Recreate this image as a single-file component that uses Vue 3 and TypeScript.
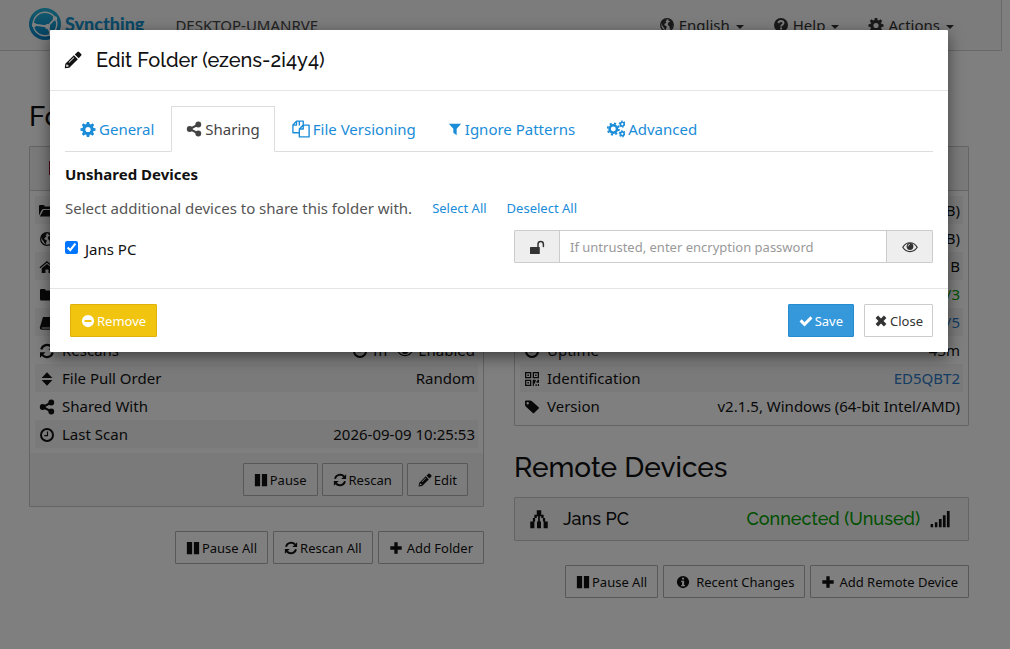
<script setup lang="ts">
import { h, ref } from 'vue'

const glyphs: Record<string, string> = {
  cog: '<path fill-rule="evenodd" d="M6.8 1h2.4l.4 2 1.2.5 1.7-1.2 1.7 1.7-1.2 1.7.5 1.2 2 .4v2.4l-2 .4-.5 1.2 1.2 1.7-1.7 1.7-1.7-1.2-1.2.5-.4 2H6.800l-.4-2-1.200-.5-1.700 1.200-1.700-1.700 1.200-1.700-.5-1.200-2-.4V7.300l2-.4.5-1.200L1.800 4l1.700-1.700 1.700 1.200 1.200-.5zM8 5.900a2.600 2.600 0 1 0 0 5.200 2.600 2.600 0 0 0 0-5.200z"/>',
  cogs: '<circle cx="5.600" cy="8" r="3.300" fill="none" stroke="currentColor" stroke-width="2.200"/><circle cx="5.600" cy="8" r="5" fill="none" stroke="currentColor" stroke-width="1.500" stroke-dasharray="1.960 1.960"/><circle cx="13.600" cy="3.700" r="1.700" fill="none" stroke="currentColor" stroke-width="1.500"/><circle cx="13.600" cy="3.700" r="2.700" fill="none" stroke="currentColor" stroke-width="1" stroke-dasharray="1.410 1.410"/><circle cx="13.600" cy="12.300" r="1.700" fill="none" stroke="currentColor" stroke-width="1.500"/><circle cx="13.600" cy="12.300" r="2.700" fill="none" stroke="currentColor" stroke-width="1" stroke-dasharray="1.410 1.410"/>',
  share: '<circle cx="12.300" cy="3.500" r="2.900"/><circle cx="3.700" cy="8" r="2.900"/><circle cx="12.300" cy="12.500" r="2.900"/><path d="M12.300 3.500 3.700 8l8.600 4.500" fill="none" stroke="currentColor" stroke-width="2"/>',
  copy: '<path d="M6.500 4.800V1H10v3.500M4 1 .8 4.500v6.800H6M6.500 1H4v3.500H.8M10 4.500 6.500 8v7h8.700V4.500zM10 4.500V8H6.500" fill="none" stroke="currentColor" stroke-width="1.200" stroke-linejoin="round"/>',
  filter: '<path d="M1 2h14L9.900 7.800v7.200l-3.800-2.700V7.800z"/>',
  pencil: '<path fill-rule="evenodd" d="M9.600 3 11.900.8q.8-.6 1.500 0L15.300 2.700q.6.700 0 1.400l-2.200 2.300zM8.800 3.800l3.500 3.500-7.600 7.500-4 .6.500-4zM2.200 12l-.3 2.100 2.100-.3v-1.200H3V12zM8.600 5.500 4.100 10l.5.500 4.500-4.500z"/>',
  unlock: '<rect x="1" y="8" width="9.800" height="7" rx=".6"/><path d="M9 8V5.200a2.700 2.700 0 0 1 5.400 0V7.400" fill="none" stroke="currentColor" stroke-width="1.500" stroke-linecap="round"/>',
  eye: '<path d="M.8 8.300C4.300 2.200 11.700 2.200 15.200 8.300 11.700 14 4.300 14 .8 8.300z" fill="none" stroke="currentColor" stroke-width="1.200"/><circle cx="8" cy="7.500" r="3.400"/><path d="M6 7.300q0-1.800 1.900-2" fill="none" stroke="#fff" stroke-width=".7"/>',
  check: '<path d="m.6 8.600 2.500-2.500 3.200 3.200L13 2.700l2.400 2.400-9.100 9.100z"/>',
  times: '<path d="m1.800 4.700 2.900-2.900L8 5.200l3.300-3.400 2.900 2.900L10.900 8l3.300 3.300-2.900 2.900L8 10.800l-3.300 3.400-2.900-2.900L5.100 8z"/>',
  minus: '<path fill-rule="evenodd" d="M8 1a7 7 0 1 0 0 14A7 7 0 0 0 8 1zM4 6.900h8v2.200H4z"/>',
  pause: '<path d="M1 1h6v14H1zM9 1h6v14H9z"/>',
  refresh: '<path d="M2.300 6.600A6 6 0 0 1 12.600 4M13.700 9.400A6 6 0 0 1 3.400 12" fill="none" stroke="currentColor" stroke-width="2.200"/><path d="M15 1.300v5.500H9.500zM1 14.700V9.200h5.500z"/>',
  plus: '<path d="M6.100 1.500h3.800v4.600h4.600v3.800H9.900v4.600H6.100V9.900H1.500V6.100h4.600z"/>',
  info: '<path fill-rule="evenodd" d="M8 1a7 7 0 1 0 0 14A7 7 0 0 0 8 1zM6.900 3.200h2.300v2H6.900zM5.800 6.500h3.500v4.800h1v1.500H5.800v-1.500h1.100V8h-1.100z"/>',
  question: '<circle cx="8" cy="8" r="7"/><path d="M5.500 6.200Q5.700 4 8 4t2.500 2c0 1.700-2.400 1.700-2.400 3.400M8.100 10.600v2" fill="none" stroke="#f8f8f8" stroke-width="1.900"/>',
  globe: '<circle cx="8" cy="8" r="6.300" fill="none" stroke="currentColor" stroke-width="1.300"/><path d="M3 4.200 6.200 2l2 .8-1.700 1.700 1 1.300-2.300 1.300.7 1.500 2 .8-.8 2.300-.7 2-1.600-3-1.700-2.500-.9-1.800zM9.500 2l3.500 1.800 1.300 3.700-1.500 3.500-1.800 1.500-.6-3.200-1.700-1.500.6-2.200 2-.8-1.800-1z"/>',
  sort: '<path d="M8 1.200 13.400 7H2.600zM8 14.800 2.600 9h10.800z"/>',
  clock: '<circle cx="8" cy="8" r="6" fill="none" stroke="currentColor" stroke-width="2"/><path d="M8.500 4.500v4.200H5.300" fill="none" stroke="currentColor" stroke-width="1.200"/>',
  qr: '<path fill-rule="evenodd" d="M1 1h6.300v6.300H1zM2.300 2.300V6H6V2.300zM8.700 1H15v6.300H8.700zM10 2.300V6h3.700V2.300zM1 8.700h6.300V15H1zM2.300 10v3.700H6V10zM3.400 3.400h1.500v1.500H3.400zM11.100 3.400h1.500v1.500h-1.500zM3.400 11.100h1.500v1.500H3.400zM8.700 8.700h3v1.500h1.600V8.700H15v3h-2.500v-1.100h-1.300v2h-1.300V15H8.700zM11.500 13.300h1.300V15h-1.300zM13.800 13H15v2h-1.200z"/>',
  tag: '<path fill-rule="evenodd" d="M1 2.500Q1 1.500 2 1.500h4.500l1.500.7 6.700 6q.6.700 0 1.300l-4.600 4.600q-.7.600-1.300 0L1.700 7.500 1 6zM3.700 3a1.200 1.200 0 1 0 0 2.400 1.200 1.200 0 0 0 0-2.400z"/>',
  folderOpen: '<path d="M0 12.500V3q0-1 1-1h3.700q1 0 1 1.500h5.500q1 0 1 1V6H4.500q-1 0-1.700 1zM4.500 7H16l-3 6.500H.8z"/>',
  folder: '<path d="M1 3.200Q1 2 2.200 2h3.300q1.200 0 1.200 1.500h7Q15 3.500 15 5v7.300q0 1.200-1.200 1.200H2.200Q1 13.500 1 12.300z"/>',
  home: '<path d="M8 5 13.300 9.300V14H9.500v-3.500h-3V14H2.700V9.300zM8 2 .5 8.300l.8.900L8 3.700l6.700 5.500.8-.9-2.300-2V3h-1.700v2z"/>',
  book: '<path d="M4 2h10.500q1 0 .7 1L12.500 11.500q-.3 1-1.300 1H2.800v1h9.500L14.500 6l1 .5-2.300 7.500q-.2.800-1.200.8H2.500Q.5 14.500.8 12.500z"/>',
  network: '<path d="M6.200 1h3.600v3.500h1.900v2.700h1.200V10H15v5.300h-3.300V10h-.6V7.200H9.800V5.700H6.200v1.500H4.900V10h-.6v5.300H1V10h2.100V7.200h1.200V4.500h1.900zM6.400 10h3.200v5.300H6.400zM7.300 5.700h1.400V10H7.300z"/>',
  signal: '<path d="M.5 12h2v2.500h-2zM3.900 10.500h2v4h-2zM7.100 8h2.200v6.500H7.100zM10.300 5h2.200v9.500h-2.200zM13.500 1.500h2.200v13h-2.200z"/>',
  stop: '<path d="M1 1h14v14H1z"/>',
}

const Icon = (props: { name: string }) =>
  h('svg', { class: 'icon', viewBox: '0 0 16 16', 'aria-hidden': 'true', innerHTML: glyphs[props.name] })
Icon.props = ['name']

const tabs = [
  { icon: 'cog', label: 'General' },
  { icon: 'share', label: 'Sharing' },
  { icon: 'copy', label: 'File Versioning' },
  { icon: 'filter', label: 'Ignore Patterns' },
  { icon: 'cogs', label: 'Advanced' },
]
const activeTab = ref('Sharing')
const shared = ref(true)
const password = ref('')

const menus = [
  { icon: 'globe', label: 'English' },
  { icon: 'question', label: 'Help' },
  { icon: 'cog', label: 'Actions' },
]

const folderRows = [
  { icon: 'folderOpen', label: '', value: '' },
  { icon: 'globe', label: '', value: '' },
  { icon: 'home', label: '', value: '' },
  { icon: 'folder', label: '', value: '' },
  { icon: 'book', label: '', value: '' },
  { icon: 'refresh', label: 'Rescans', value: 'rescans' },
  { icon: 'sort', label: 'File Pull Order', value: 'Random' },
  { icon: 'share', label: 'Shared With', value: '' },
  { icon: 'clock', label: 'Last Scan', value: '2026-09-09 10:25:53' },
]

const deviceRows = [
  { icon: '', label: '', value: 'B)', tone: '' },
  { icon: '', label: '', value: 'B)', tone: '' },
  { icon: '', label: '', value: 'B', tone: '' },
  { icon: '', label: '', value: '/3', tone: 'green' },
  { icon: '', label: '', value: '/5', tone: 'blue' },
  { icon: 'clock', label: 'Uptime', value: '43m', tone: '' },
  { icon: 'qr', label: 'Identification', value: 'ED5QBT2', tone: 'blue' },
  { icon: 'tag', label: 'Version', value: 'v2.1.5, Windows (64-bit Intel/AMD)', tone: '' },
]
</script>

<template>
  <div class="page">
    <nav class="navbar">
      <a class="brand" href="#">
        <svg class="logo" viewBox="0 0 32 32" aria-hidden="true">
          <defs>
            <linearGradient id="logo-fill" x1="0" y1="0" x2="0" y2="1">
              <stop offset="0" stop-color="#26b6db" />
              <stop offset="1" stop-color="#0882c8" />
            </linearGradient>
          </defs>
          <circle cx="16" cy="16" r="16" fill="url(#logo-fill)" />
          <g fill="none" stroke="#fff" stroke-width="1.400">
            <circle cx="16" cy="16" r="11.800" />
            <path d="M18.500 18.500 26 10.500M18.500 18.500 4.500 16.500M18.500 18.500 22 26" stroke-width="1.800" />
          </g>
          <g fill="#fff">
            <circle cx="18.500" cy="18.500" r="2.500" />
            <circle cx="26" cy="10.500" r="2.200" />
            <circle cx="5" cy="17" r="2.200" />
            <circle cx="22" cy="26" r="2.200" />
          </g>
        </svg>
        <span>Syncthing</span>
      </a>
      <span class="host">DESKTOP-UMANRVE</span>
      <div class="menus">
        <button v-for="m in menus" :key="m.label" type="button" class="menu">
          <Icon :name="m.icon" />{{ m.label }}<span class="caret"></span>
        </button>
      </div>
    </nav>

    <main class="columns">
      <section class="column">
        <h2>Folders</h2>
        <div class="panel">
          <div class="panel-head"><Icon name="stop" class="folder-state" /></div>
          <div class="panel-body">
            <table>
              <tbody>
                <tr v-for="(r, i) in folderRows" :key="i">
                  <th scope="row"><Icon :name="r.icon" />{{ r.label }}</th>
                  <td v-if="r.value === 'rescans'">
                    <span class="scan"><Icon name="clock" />m</span>
                    <span class="scan"><Icon name="eye" />Enabled</span>
                  </td>
                  <td v-else>{{ r.value }}</td>
                </tr>
              </tbody>
            </table>
          </div>
          <div class="panel-foot">
            <button type="button" class="btn"><Icon name="pause" />Pause</button>
            <button type="button" class="btn"><Icon name="refresh" />Rescan</button>
            <button type="button" class="btn"><Icon name="pencil" />Edit</button>
          </div>
        </div>
        <div class="actions">
          <button type="button" class="btn"><Icon name="pause" />Pause All</button>
          <button type="button" class="btn"><Icon name="refresh" />Rescan All</button>
          <button type="button" class="btn add"><Icon name="plus" />Add Folder</button>
        </div>
      </section>

      <section class="column">
        <div class="panel this-device">
          <div class="panel-head"></div>
          <div class="panel-body">
            <table>
              <tbody>
                <tr v-for="(r, i) in deviceRows" :key="i">
                  <th scope="row"><Icon v-if="r.icon" :name="r.icon" />{{ r.label }}</th>
                  <td :class="r.tone">
                    <a v-if="r.label === 'Identification'" href="#">{{ r.value }}</a>
                    <template v-else>{{ r.value }}</template>
                  </td>
                </tr>
              </tbody>
            </table>
          </div>
        </div>
        <h2 class="remote">Remote Devices</h2>
        <div class="panel">
          <button type="button" class="panel-head device">
            <Icon name="network" />
            <span>Jans PC</span>
            <span class="status">Connected (Unused)</span>
            <Icon name="signal" />
          </button>
        </div>
        <div class="actions">
          <button type="button" class="btn"><Icon name="pause" />Pause All</button>
          <button type="button" class="btn info"><Icon name="info" />Recent Changes</button>
          <button type="button" class="btn add"><Icon name="plus" />Add Remote Device</button>
        </div>
      </section>
    </main>

    <div class="backdrop">
      <div class="modal" role="dialog" aria-labelledby="dialog-title">
        <header>
          <Icon name="pencil" />
          <h4 id="dialog-title">Edit Folder (ezens-2i4y4)</h4>
        </header>
        <div class="modal-body">
          <div class="tabs" role="tablist">
            <button
              v-for="t in tabs"
              :key="t.label"
              type="button"
              role="tab"
              class="tab"
              :class="[t.icon, { active: t.label === activeTab }]"
              :aria-selected="t.label === activeTab"
              @click="activeTab = t.label"
            >
              <Icon :name="t.icon" />{{ t.label }}
            </button>
          </div>
          <h5>Unshared Devices</h5>
          <p class="help">
            <span>Select additional devices to share this folder with.</span>
            <a href="#">Select All</a>
            <a href="#">Deselect All</a>
          </p>
          <div class="share-row">
            <label class="check"><input v-model="shared" type="checkbox" /><span>Jans PC</span></label>
            <div class="input-group">
              <span class="addon"><Icon name="unlock" /></span>
              <input
                v-model="password"
                type="text"
                aria-label="Encryption password"
                placeholder="If untrusted, enter encryption password"
              />
              <button type="button" class="addon" aria-label="Show password"><Icon name="eye" /></button>
            </div>
          </div>
        </div>
        <footer>
          <button type="button" class="btn warning"><Icon name="minus" />Remove</button>
          <button type="button" class="btn primary"><Icon name="check" />Save</button>
          <button type="button" class="btn close"><Icon name="times" />Close</button>
        </footer>
      </div>
    </div>
  </div>
</template>

<style>
html,
body,
#app {
  height: 100%;
}
body {
  margin: 0;
  background: #fff;
}
</style>

<style scoped>
* {
  box-sizing: border-box;
}
.page {
  position: relative;
  min-height: 100%;
  overflow: hidden;
  font-family: "Noto Sans", "Open Sans", sans-serif;
  font-size: 15px;
  line-height: 22px;
  color: #111;
}
button,
input {
  font: inherit;
  color: inherit;
  margin: 0;
}
a {
  color: #1a8cd8;
  text-decoration: none;
}
.icon {
  width: 16px;
  height: 16px;
  fill: currentColor;
  flex: none;
}
.navbar {
  display: flex;
  align-items: center;
  height: 51px;
  margin-right: 8px;
  padding: 0 47px 0 29px;
  background: #f8f8f8;
  border: solid #d0d0d0;
  border-width: 0 1px 1px 0;
  border-radius: 0 0 2px 0;
}
.brand {
  display: flex;
  align-items: center;
  gap: 4px;
  font: 900 18px/20px Lato, sans-serif;
  color: #1592cf;
  margin-top: -2px;
}
.logo {
  width: 32px;
  height: 32px;
}
.host {
  margin-left: 31px;
  color: #444;
}
.menus {
  display: flex;
  gap: 29px;
  margin-left: auto;
  color: #333;
}
.menu {
  display: flex;
  align-items: center;
  gap: 4px;
  padding: 0;
  border: 0;
  background: none;
}
.caret {
  margin: 4px 0 0 2px;
  border: 4px solid transparent;
  border-top-color: currentColor;
  border-bottom: 0;
}
.columns {
  display: grid;
  grid-template-columns: 1fr 1fr;
  gap: 30px;
  padding: 0 41px 0 29px;
}
h2 {
  margin: 50px 0 14px;
  font: 500 28px/31px Raleway, Lato, sans-serif;
}
h2.remote {
  margin: 26px 0 14px;
}
.panel {
  border: 1px solid #c8c8c8;
  border-radius: 1px;
}
.this-device {
  margin-top: 95px;
}
.panel-head {
  height: 44px;
  background: #f5f5f5;
  border-bottom: 1px solid #ccc;
  padding: 12px 15px;
}
.folder-state {
  color: #a01030;
  margin-left: 3px;
}
.panel-body {
  padding: 5px;
}
table {
  width: 100%;
  border-collapse: collapse;
}
tr {
  height: 28px;
}
tr:nth-child(odd) {
  background: #f5f5f5;
}
th,
td {
  padding: 0 3px;
  font-weight: 400;
  text-align: left;
  white-space: nowrap;
}
td {
  text-align: right;
}
th .icon {
  margin: 0 7px 0 1px;
  vertical-align: -3px;
}
.scan {
  margin-left: 10px;
}
.scan .icon {
  margin-right: 5px;
  vertical-align: -3px;
}
.green,
.status {
  color: #00a000;
}
.blue,
.blue a {
  color: #2b78c5;
}
.panel-foot {
  display: flex;
  justify-content: flex-end;
  gap: 4px;
  padding: 10px 15px;
  background: #f5f5f5;
}
.actions {
  display: flex;
  justify-content: flex-end;
  gap: 5px;
  margin-top: 24px;
}
.btn {
  display: flex;
  align-items: center;
  justify-content: center;
  gap: 2px;
  height: 33px;
  padding: 0 10px;
  border: 1px solid #b0b0b0;
  border-radius: 1px;
  background: #fff;
  font-size: 13px;
  white-space: nowrap;
}
.panel-foot .btn {
  background: #f8f8f8;
}
.btn .icon {
  width: 14px;
  height: 14px;
}
.btn.info {
  gap: 6px;
  padding-left: 12px;
}
.btn.add {
  gap: 4px;
}
.device {
  display: flex;
  align-items: center;
  gap: 14px;
  width: 100%;
  height: 42px;
  padding: 0 18px 0 14px;
  border: 0;
  font: 500 18px/20px Raleway, Lato, sans-serif;
}
.device .icon {
  width: 20px;
  height: 20px;
}
.status {
  margin-left: auto;
  margin-right: -4px;
}
.backdrop {
  position: absolute;
  inset: 0;
  padding: 30px 62px 0 50px;
  background: rgba(0, 0, 0, 0.5);
}
.modal {
  max-width: 900px;
  margin: 0 auto;
  background: #fff;
  border-radius: 1px;
  box-shadow: 0 5px 15px rgba(0, 0, 0, 0.5);
}
header {
  display: flex;
  align-items: center;
  gap: 14px;
  height: 61px;
  padding: 0 14px;
  border-bottom: 1px solid #e5e5e5;
}
header .icon {
  width: 18px;
  height: 18px;
}
h4 {
  margin: 0;
  font: 500 20px/22px Raleway, Lato, sans-serif;
}
.modal-body {
  padding: 15px 15px 25px;
}
.tabs {
  display: flex;
  gap: 2px;
  border-bottom: 1px solid #ddd;
}
.tab {
  display: flex;
  align-items: center;
  gap: 3px;
  height: 46px;
  margin-bottom: -1px;
  padding: 0 14px;
  border: 1px solid transparent;
  border-radius: 1px;
  background: none;
  color: #1a8cd8;
  white-space: nowrap;
}
.tab.copy .icon,
.tab.cogs .icon {
  width: 18px;
  height: 18px;
}
.tab.filter .icon {
  width: 14px;
  height: 14px;
}
.tab.active {
  background: #fff;
  border-color: #ddd;
  border-bottom-color: #fff;
  color: #444;
}
h5 {
  margin: 11px 0 12px;
  font: 700 15px/22px "Noto Sans", sans-serif;
  color: #111;
}
.help {
  display: flex;
  align-items: center;
  margin: 0;
  color: #555;
}
.help a {
  margin-left: 20px;
  font-size: 13px;
}
.share-row {
  display: flex;
  margin-top: 11px;
}
.check {
  display: flex;
  flex: 1;
  gap: 7px;
  align-items: center;
  padding-top: 4px;
}
.check input {
  width: 13px;
  height: 13px;
  margin-bottom: 2px;
}
.input-group {
  display: flex;
  width: 419px;
  height: 33px;
  border: 1px solid #ccc;
  border-radius: 1px;
}
.input-group input {
  flex: 1;
  min-width: 0;
  padding: 0 10px;
  border: 0;
  font-size: 13px;
}
.input-group input::placeholder {
  color: #999;
}
.addon {
  display: flex;
  align-items: center;
  justify-content: center;
  width: 45px;
  padding: 0;
  border: 0;
  border-right: 1px solid #ccc;
  background: #eee;
  color: #333;
}
button.addon {
  width: 46px;
  border-right: 0;
  border-left: 1px solid #ccc;
}
footer {
  display: flex;
  align-items: center;
  gap: 10px;
  padding: 15px 15px 15px 20px;
  border-top: 1px solid #e5e5e5;
}
footer .btn {
  border-color: #ccc;
}
footer .close {
  padding: 0 9px;
  color: #333;
}
footer .warning {
  margin-right: auto;
  background: #f1c40f;
  border-color: #dfb20b;
  color: #fff;
}
footer .primary {
  background: #3498db;
  border-color: #258cd1;
  color: #fff;
}
</style>
